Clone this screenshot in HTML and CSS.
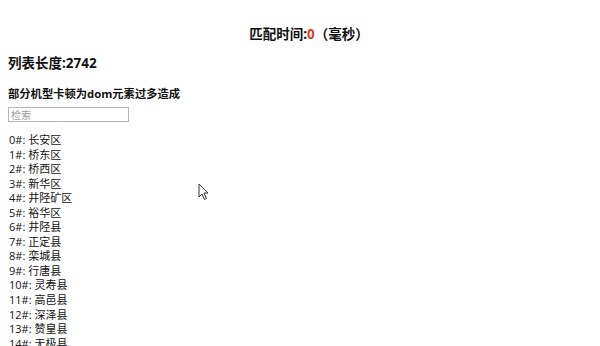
FILE: index.html
```html
<!DOCTYPE html>
<html lang="zh-CN">

<head>
    <meta charset="UTF-8">
    <meta name="viewport" content="width=device-width, initial-scale=1.0">
    <title>列表检索</title>
    <link rel="stylesheet" href="styles.css">
</head>

<body>
    <div class="timer">匹配时间:<span class="time-value">0</span>（毫秒）</div>
    <div class="list-length">列表长度:2742</div>
    <div class="tip">部分机型卡顿为dom元素过多造成</div>
    <input class="search" type="text" placeholder="检索">

    <ul class="area-list">
        <li>0#: 长安区</li>
        <li>1#: 桥东区</li>
        <li>2#: 桥西区</li>
        <li>3#: 新华区</li>
        <li>4#: 井陉矿区</li>
        <li>5#: 裕华区</li>
        <li>6#: 井陉县</li>
        <li>7#: 正定县</li>
        <li>8#: 栾城县</li>
        <li>9#: 行唐县</li>
        <li>10#: 灵寿县</li>
        <li>11#: 高邑县</li>
        <li>12#: 深泽县</li>
        <li>13#: 赞皇县</li>
        <li>14#: 无极县</li>
        <li>15#: 平山县</li>
        <li>16#: 元氏县</li>
    </ul>

    <svg class="cursor" width="12" height="18" viewBox="0 0 12 18">
        <path d="M1 1 L1 14 L4 11 L6.5 16.5 L8.5 15.5 L6 10 L10 10 Z" fill="#fff" stroke="#333" stroke-width="1" stroke-linejoin="round" />
    </svg>
</body>

</html>
```

FILE: styles.css
```css
body {
    margin: 0;
    padding: 0 8px;
    font-family: "Open Sans", "Noto Sans CJK SC", sans-serif;
    color: #111111;
    background-color: #ffffff;
}

.timer {
    margin-top: 24px;
    padding-left: 18px;
    text-align: center;
    font-size: 13.5px;
    font-weight: bold;
    line-height: 20px;
}

.time-value {
    color: #e03c1c;
}

.list-length {
    margin-top: 9px;
    font-size: 13.5px;
    font-weight: bold;
    line-height: 20px;
}

.tip {
    margin-top: 12px;
    font-size: 11.3px;
    font-weight: bold;
    line-height: 17px;
}

.search {
    display: block;
    box-sizing: border-box;
    margin: 5px 0 0;
    width: 121px;
    height: 15px;
    padding: 0 2px;
    border: 1px solid #b5b5b5;
    font-family: inherit;
    font-size: 10px;
    outline: none;
}

.search::placeholder {
    color: #a0a0a0;
}

.area-list {
    list-style: none;
    margin: 11px 0 0;
    padding: 0 0 0 1px;
    font-size: 11px;
    line-height: 14.55px;
}

.cursor {
    position: absolute;
    left: 198px;
    top: 183px;
}
```
